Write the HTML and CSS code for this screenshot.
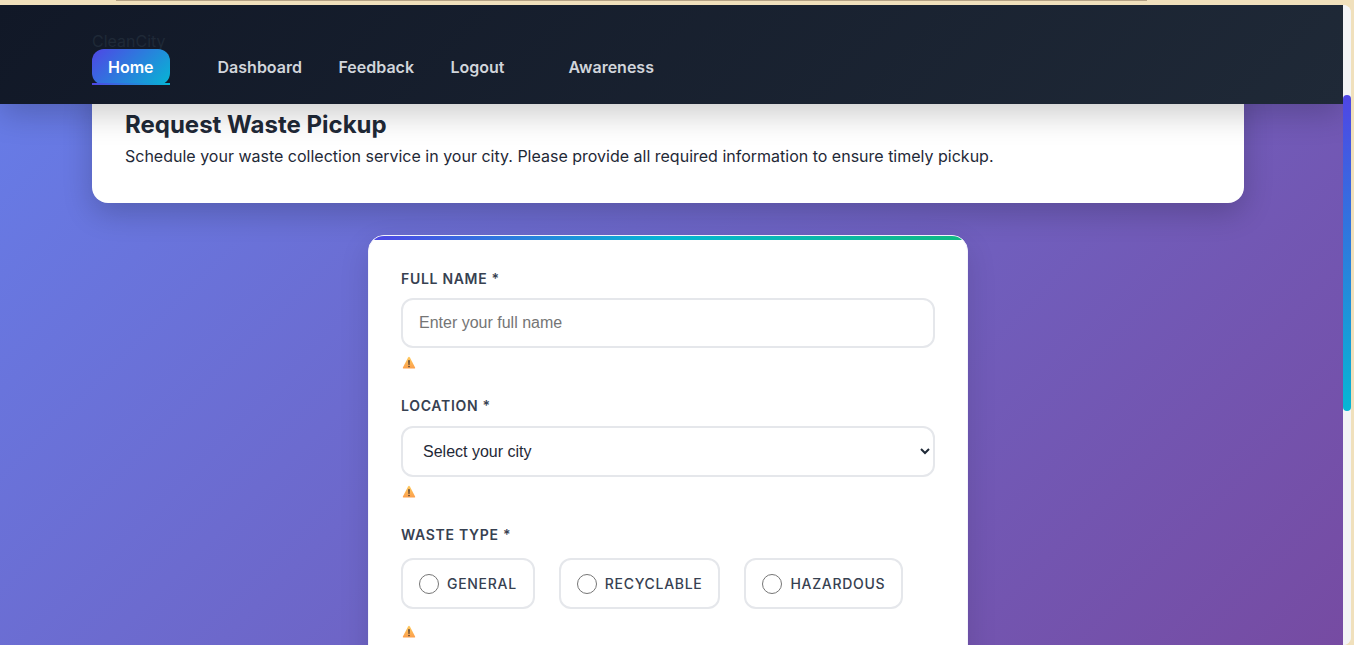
FILE: index.html
```html
<!DOCTYPE html>
<html lang="en">
<head>
<meta charset="utf-8">
<title>CleanCity</title>
<meta name="viewport" content="width=device-width, initial-scale=1">
<link rel="stylesheet" href="styles.css">
</head>
<body>
<svg class="sprite" aria-hidden="true">
  <linearGradient id="warn-fill" x1="0" y1="0" x2="0" y2="1">
    <stop offset="0" stop-color="#ffc95c"/><stop offset="1" stop-color="#fb9f4c"/>
  </linearGradient>
  <symbol id="warning" viewBox="0 0 16 16">
    <path d="M7.1 2.4Q8 1.2 8.9 2.4L14.1 12.4Q14.5 13.5 13.6 13.5H2.4Q1.5 13.5 1.9 12.4Z" fill="url(#warn-fill)"/>
    <path d="M7.2 5.2H8.8L8.5 10H7.5Z" fill="#4b3b35"/>
    <circle cx="8" cy="11.6" r=".8" fill="#4b3b35"/>
  </symbol>
</svg>
<div class="toolbar-edge"></div>
<div class="window">
  <div class="page">
    <header class="header">
      <div class="brand">CleanCity</div>
      <nav class="nav" aria-label="Main">
        <div class="nav-group"><a class="nav-link active" href="#home">Home</a></div>
        <div class="nav-group">
          <a class="nav-link" href="#dashboard">Dashboard</a>
          <a class="nav-link" href="#feedback">Feedback</a>
          <a class="nav-link" href="#logout">Logout</a>
        </div>
        <div class="nav-group"><a class="nav-link" href="#awareness">Awareness</a></div>
      </nav>
    </header>
    <main class="main">
      <section class="intro">
        <h1 class="title">Request Waste Pickup</h1>
        <p class="lead">Schedule your waste collection service in your city. Please provide all required information to ensure timely pickup.</p>
      </section>
      <form class="form">
        <div class="field">
          <label class="label" for="name">Full Name *</label>
          <input class="control" id="name" type="text" placeholder="Enter your full name">
          <div class="error"><svg class="warn" role="img" aria-label="Warning"><use href="#warning"/></svg></div>
        </div>
        <div class="field field-select">
          <label class="label" for="city">Location *</label>
          <select class="control" id="city"><option>Select your city</option></select>
          <div class="error"><svg class="warn" role="img" aria-label="Warning"><use href="#warning"/></svg></div>
        </div>
        <fieldset class="field field-radios">
          <legend class="label">Waste Type *</legend>
          <div class="options">
            <label class="option"><input class="radio" type="radio" name="waste"><span>General</span></label>
            <label class="option"><input class="radio" type="radio" name="waste"><span>Recyclable</span></label>
            <label class="option"><input class="radio" type="radio" name="waste"><span>Hazardous</span></label>
          </div>
          <div class="error"><svg class="warn" role="img" aria-label="Warning"><use href="#warning"/></svg></div>
        </fieldset>
      </form>
    </main>
  </div>
  <div class="scrollbar"><div class="thumb"></div></div>
</div>
</body>
</html>
```
FILE: styles.css
```css
* { box-sizing: border-box; }

body {
  margin: 0;
  height: 100vh;
  display: flex;
  flex-direction: column;
  overflow: hidden;
  background: #f0e0bc;
  color: #1f2937;
  font: 16px/26px Inter, "Liberation Sans", sans-serif;
}

.sprite { position: absolute; width: 0; height: 0; }

.toolbar-edge {
  flex: none;
  height: 5px;
  padding: 0 207px 0 116px;
}
.toolbar-edge::before {
  content: "";
  display: block;
  height: 1px;
  background: #b5a285;
}

.window {
  flex: 1;
  min-height: 0;
  display: flex;
  margin-right: 3px;
  border-radius: 0 8px 8px 0;
  overflow: hidden;
  background: #f3f4f6;
}

.page {
  flex: 1;
  min-width: 0;
  overflow: hidden;
  background: linear-gradient(135deg, #667eea 0%, #764ba2 100%);
}

.scrollbar { flex: none; width: 8px; padding-top: 90px; background: #f3f4f6; }
.thumb {
  height: 57.5%;
  border-radius: 4px;
  background: linear-gradient(180deg, #4f46e5, #06b6d4);
}

.header {
  position: relative;
  z-index: 1;
  padding: 23px 99px 24px 92px;
  background: linear-gradient(135deg, #111827, #1f2937);
  box-shadow: 0 10px 30px rgba(0, 0, 0, .2);
}
.brand { color: #1f2937; }
.nav { display: flex; gap: 32px; }

.nav-link {
  position: relative;
  padding: 8px 16px;
  border-radius: 12px;
  color: #d1d5db;
  font-weight: 600;
  text-decoration: none;
}
.nav-link.active {
  background: linear-gradient(135deg, #4f46e5, #06b6d4);
  color: #fff;
}
.nav-link.active::after {
  content: "";
  position: absolute;
  left: 0;
  right: 0;
  bottom: 0;
  height: 2px;
  background: linear-gradient(90deg, #4f46e5, #06b6d4);
}

.main { padding: 0 99px 0 92px; }

.intro {
  margin: -27px 0 32px;
  padding: 33px 33px 34px;
  border-radius: 16px;
  background: #fff;
  box-shadow: 0 10px 30px rgba(0, 0, 0, .2);
}
.title { margin: 0 0 4px; font-size: 24px; line-height: 29px; font-weight: 700; }
.lead { margin: 0; }

.form {
  position: relative;
  max-width: 600px;
  margin: 0 auto;
  padding: 32px;
  border: 1px solid #f4f4fb;
  border-radius: 16px;
  overflow: hidden;
  background: #fff;
  box-shadow: 0 10px 30px rgba(0, 0, 0, .12);
}
.form::before {
  content: "";
  position: absolute;
  top: 0;
  left: 0;
  right: 0;
  height: 4px;
  background: linear-gradient(90deg, #4f46e5, #06b6d4, #10b981);
}

.field { margin: 0 0 23px; padding: 0; border: 0; }
.label {
  display: block;
  padding: 0;
  margin-bottom: 8px;
  color: #374151;
  font-size: 14px;
  line-height: 22px;
  font-weight: 600;
  letter-spacing: .05em;
  text-transform: uppercase;
}
.field-select .label { margin-bottom: 9px; }
.field-radios .label { margin-bottom: 12px; }

.control {
  display: block;
  width: 100%;
  height: 50px;
  padding: 0 16px;
  border: 2px solid #e5e7eb;
  border-radius: 12px;
  background: #fff;
  color: #1f2937;
  font: 16px "Liberation Sans", Arial, sans-serif;
}
.control::placeholder { color: #757575; }
.field-select .control { height: 51px; }

.error { display: flex; align-items: center; height: 19px; margin-top: 5px; }
.field-radios .error { margin-top: 13px; }
.warn { width: 16px; height: 16px; }

.options { display: flex; gap: 24px; }
.option {
  display: flex;
  align-items: center;
  gap: 8px;
  height: 51px;
  padding: 0 16px;
  border: 2px solid #e5e7eb;
  border-radius: 12px;
  color: #374151;
  font-size: 14px;
  line-height: 22px;
  font-weight: 500;
  letter-spacing: .05em;
  text-transform: uppercase;
}
.radio { width: 20px; height: 20px; margin: 0; }
```
